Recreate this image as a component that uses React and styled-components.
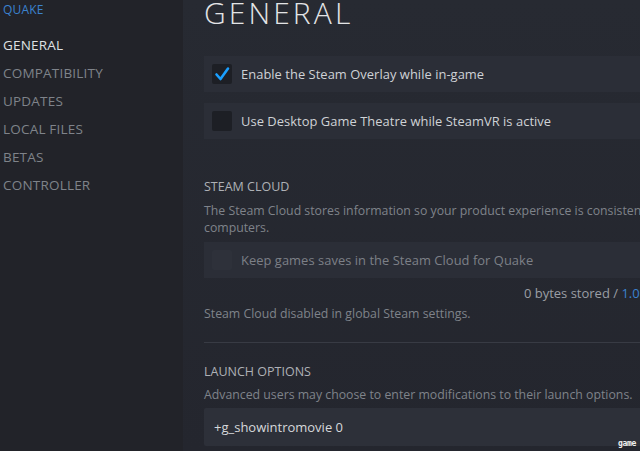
import React from "react";
import styled, { createGlobalStyle } from "styled-components";

const Global = createGlobalStyle`
  html, body { margin: 0; padding: 0; background: #23252c; overflow: hidden; }
  body { font-family: "Open Sans", "Liberation Sans", sans-serif; }
  #root { width: 640px; height: 451px; overflow: hidden; }
`;

const Page = styled.div`
  display: flex;
  width: 640px;
  height: 451px;
  overflow: hidden;
  position: relative;
`;

const Sidebar = styled.nav`
  flex: 0 0 183px;
  background: #222329;
  display: flex;
  flex-direction: column;
  padding: 2px 0 0 3px;
  box-sizing: border-box;
`;

const GameName = styled.div`
  color: #3b82cf;
  font-size: 12px;
  line-height: 16px;
  height: 29px;
  letter-spacing: 0.2px;
`;

const NavItem = styled.div`
  color: ${(p) => (p.$active ? "#dfe1e3" : "#7f838a")};
  font-size: 13.5px;
  line-height: 18px;
  height: 28px;
  display: flex;
  align-items: center;
  letter-spacing: 0.2px;
`;

const Main = styled.main`
  flex: 0 0 auto;
  width: 560px;
  background: linear-gradient(180deg, #272a32 0%, #24262e 100%);
  padding: 0 0 0 21px;
  box-sizing: border-box;
  position: relative;
`;

const Content = styled.div`
  width: 505px;
  display: flex;
  flex-direction: column;
`;

const Title = styled.h1`
  margin: -6px 0 0 0;
  font-weight: 300;
  font-size: 30px;
  line-height: 38px;
  letter-spacing: 3.1px;
  color: #e3e4e6;
`;

const Row = styled.div`
  display: flex;
  align-items: center;
  gap: 9px;
  height: 36px;
  padding: 0 0 0 8px;
  background: #2b2e37;
  margin-top: ${(p) => p.$mt || 0}px;
`;

const Box = styled.div`
  width: 20px;
  height: 20px;
  border-radius: 2px;
  background: ${(p) => (p.$disabled ? "#2e313a" : "#1d1f25")};
  display: flex;
  align-items: center;
  justify-content: center;
`;

const RowLabel = styled.span`
  font-size: 12.9px;
  color: ${(p) => (p.$disabled ? "#7d8087" : "#cfd2d6")};
  letter-spacing: 0.05px;
`;

const SectionTitle = styled.div`
  margin-top: ${(p) => p.$mt}px;
  font-size: 12.5px;
  line-height: 18px;
  color: #aeb1b6;
`;

const Desc = styled.div`
  font-size: 12.3px;
  line-height: 17px;
  color: #7f838a;
  margin-top: ${(p) => p.$mt || 0}px;
`;

const Stored = styled.div`
  margin: 6px -16px 0 0;
  text-align: right;
  font-size: 13px;
  line-height: 18px;
  color: #9a9ea4;
  white-space: nowrap;
`;

const Link = styled.span`
  color: #3b82cf;
`;

const Divider = styled.hr`
  border: 0;
  height: 1px;
  background: #383b44;
  margin: 20px 0 0 0;
`;

const Input = styled.div`
  margin-top: 5px;
  height: 38px;
  background: #2d3039;
  display: flex;
  align-items: center;
  padding-left: 10px;
  font-size: 13px;
  color: #d6d8db;
  border-radius: 2px;
`;

const Watermark = styled.div`
  position: absolute;
  right: 4px;
  bottom: 3px;
  font-family: "DejaVu Sans Mono", monospace;
  font-size: 8px;
  font-weight: bold;
  color: #f0f0f0;
  letter-spacing: -0.3px;
`;

const Check = () => (
  <svg width="18" height="18" viewBox="0 0 18 18">
    <path d="M3.5 9.5 L7.5 14 L15 3.5" fill="none" stroke="#1a9fff" strokeWidth="2.6" strokeLinecap="round" strokeLinejoin="round" />
  </svg>
);

export default function App() {
  const nav = ["GENERAL", "COMPATIBILITY", "UPDATES", "LOCAL FILES", "BETAS", "CONTROLLER"];
  return (
    <Page>
      <Global />
      <Sidebar>
        <GameName>QUAKE</GameName>
        {nav.map((n, i) => (
          <NavItem key={n} $active={i === 0}>{n}</NavItem>
        ))}
      </Sidebar>
      <Main>
        <Content>
          <Title>GENERAL</Title>
          <Row $mt={24}>
            <Box><Check /></Box>
            <RowLabel>Enable the Steam Overlay while in-game</RowLabel>
          </Row>
          <Row $mt={11}>
            <Box />
            <RowLabel>Use Desktop Game Theatre while SteamVR is active</RowLabel>
          </Row>
          <SectionTitle $mt={39}>STEAM CLOUD</SectionTitle>
          <Desc $mt={6}>The Steam Cloud stores information so your product experience is consistent across computers.</Desc>
          <Row $mt={6}>
            <Box $disabled />
            <RowLabel $disabled>Keep games saves in the Steam Cloud for Quake</RowLabel>
          </Row>
          <Stored>0 bytes stored / <Link>1.00 GB available</Link></Stored>
          <Desc $mt={3}>Steam Cloud disabled in global Steam settings.</Desc>
          <Divider />
          <SectionTitle $mt={20}>LAUNCH OPTIONS</SectionTitle>
          <Desc $mt={5}>Advanced users may choose to enter modifications to their launch options.</Desc>
          <Input>+g_showintromovie 0</Input>
        </Content>
      </Main>
      <Watermark>game</Watermark>
    </Page>
  );
}
